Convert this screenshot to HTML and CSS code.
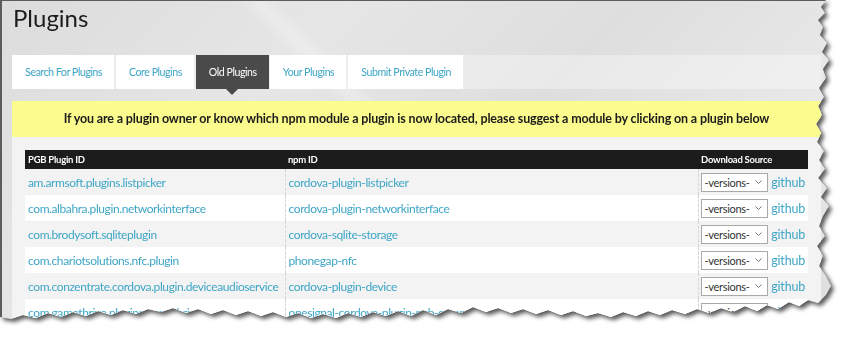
FILE: index.html
```html
<!DOCTYPE html>
<html lang="en">
<head>
  <meta charset="UTF-8" />
  <title>Plugins</title>
  <link rel="stylesheet" href="styles.css">
</head>
<body>

  <div class="shot">
    <div class="page">
      <h1 class="title">Plugins</h1>

      <nav class="tabs">
        <a href="#" class="tab">Search For Plugins</a>
        <a href="#" class="tab">Core Plugins</a>
        <a href="#" class="tab active">Old Plugins</a>
        <a href="#" class="tab">Your Plugins</a>
        <a href="#" class="tab">Submit Private Plugin</a>
      </nav>

      <div class="panel">
        <div class="notice">If you are a plugin owner or know which npm module a plugin is now located, please suggest a module by clicking on a plugin below</div>

        <table class="plugins">
          <colgroup>
            <col class="col-id">
            <col class="col-npm">
            <col class="col-src">
          </colgroup>
          <thead>
            <tr>
              <th>PGB Plugin ID</th>
              <th>npm ID</th>
              <th>Download Source</th>
            </tr>
          </thead>
          <tbody>
            <tr>
              <td><a href="#">am.armsoft.plugins.listpicker</a></td>
              <td><a href="#">cordova-plugin-listpicker</a></td>
              <td><div class="src"><span class="versions">-versions-<svg width="7" height="4" viewBox="0 0 7 4"><path d="M0.5 0.5 L3.5 3.5 L6.5 0.5" fill="none" stroke="#777" stroke-width="1"/></svg></span><a href="#">github</a></div></td>
            </tr>
            <tr>
              <td><a href="#">com.albahra.plugin.networkinterface</a></td>
              <td><a href="#">cordova-plugin-networkinterface</a></td>
              <td><div class="src"><span class="versions">-versions-<svg width="7" height="4" viewBox="0 0 7 4"><path d="M0.5 0.5 L3.5 3.5 L6.5 0.5" fill="none" stroke="#777" stroke-width="1"/></svg></span><a href="#">github</a></div></td>
            </tr>
            <tr>
              <td><a href="#">com.brodysoft.sqliteplugin</a></td>
              <td><a href="#">cordova-sqlite-storage</a></td>
              <td><div class="src"><span class="versions">-versions-<svg width="7" height="4" viewBox="0 0 7 4"><path d="M0.5 0.5 L3.5 3.5 L6.5 0.5" fill="none" stroke="#777" stroke-width="1"/></svg></span><a href="#">github</a></div></td>
            </tr>
            <tr>
              <td><a href="#">com.chariotsolutions.nfc.plugin</a></td>
              <td><a href="#">phonegap-nfc</a></td>
              <td><div class="src"><span class="versions">-versions-<svg width="7" height="4" viewBox="0 0 7 4"><path d="M0.5 0.5 L3.5 3.5 L6.5 0.5" fill="none" stroke="#777" stroke-width="1"/></svg></span><a href="#">github</a></div></td>
            </tr>
            <tr>
              <td><a href="#">com.conzentrate.cordova.plugin.deviceaudioservice</a></td>
              <td><a href="#">cordova-plugin-device</a></td>
              <td><div class="src"><span class="versions">-versions-<svg width="7" height="4" viewBox="0 0 7 4"><path d="M0.5 0.5 L3.5 3.5 L6.5 0.5" fill="none" stroke="#777" stroke-width="1"/></svg></span><a href="#">github</a></div></td>
            </tr>
            <tr>
              <td><a href="#">com.gamethrive.plugins.gamethrive</a></td>
              <td><a href="#">onesignal-cordova-plugin-pgb-compat</a></td>
              <td><div class="src"><span class="versions">-versions-<svg width="7" height="4" viewBox="0 0 7 4"><path d="M0.5 0.5 L3.5 3.5 L6.5 0.5" fill="none" stroke="#777" stroke-width="1"/></svg></span><a href="#">github</a></div></td>
            </tr>
          </tbody>
        </table>
      </div>
    </div>
  </div>

</body>
</html>
```

FILE: styles.css
```css
* { box-sizing: border-box; }
body {
  margin: 0;
  background: #ffffff;
  font-family: 'Lato', 'Open Sans', sans-serif;
}

/* torn-paper screenshot frame */
.shot {
  width: 848px;
  height: 338px;
  filter: drop-shadow(3px 3px 2px rgba(0,0,0,0.65));
}

.page {
  width: 836px;
  height: 324px;
  overflow: hidden;
  padding-left: 10px;
  border-left: 2px solid #5c5c5c;
  border-top: 1px solid #5c5c5c;
  background:
    linear-gradient(45deg, transparent 48%, rgba(255,255,255,0.25) 50%, transparent 52%),
    linear-gradient(135deg, #dcdcdc 0%, #e6e6e6 30%, #dedede 55%, #e9e9e9 80%, #dddddd 100%);
  clip-path: polygon(0 0, 826px 0, 821px 7px, 825px 13px, 818px 20px, 823px 27px, 820px 35px, 827px 43px, 822px 52px, 829px 60px, 823px 69px, 826px 78px, 819px 88px, 824px 97px, 818px 106px, 822px 115px, 816px 124px, 821px 133px, 817px 142px, 824px 151px, 819px 160px, 825px 169px, 818px 178px, 827px 188px, 821px 197px, 829px 206px, 823px 216px, 819px 226px, 825px 236px, 817px 246px, 823px 256px, 819px 266px, 826px 276px, 831px 286px, 826px 295px, 818px 303px, 808px 300px, 799px 306px, 789px 302px, 778px 309px, 767px 305px, 757px 311px, 745px 306px, 733px 312px, 721px 308px, 709px 313px, 697px 309px, 685px 314px, 672px 310px, 660px 315px, 648px 311px, 636px 316px, 623px 312px, 611px 317px, 598px 313px, 586px 316px, 573px 311px, 561px 315px, 548px 310px, 536px 314px, 523px 309px, 511px 313px, 498px 308px, 486px 312px, 473px 307px, 461px 313px, 448px 309px, 436px 315px, 423px 310px, 411px 316px, 398px 311px, 386px 316px, 373px 312px, 361px 317px, 348px 313px, 336px 318px, 323px 314px, 311px 318px, 298px 313px, 286px 317px, 273px 312px, 261px 316px, 248px 311px, 236px 315px, 223px 310px, 211px 314px, 198px 309px, 186px 313px, 173px 308px, 161px 312px, 148px 309px, 136px 314px, 123px 310px, 111px 315px, 98px 311px, 86px 316px, 73px 312px, 61px 317px, 48px 313px, 36px 318px, 23px 315px, 11px 319px, 0 317px);
}

.title {
  margin: 0;
  font-size: 24px;
  line-height: 34px;
  font-weight: normal;
  color: #1c1c1c;
  padding-left: 1px;
}

.tabs {
  margin-top: 20px;
  width: 809px;
  height: 34px;
  display: flex;
  gap: 1px;
  background: rgba(255,255,255,0.35);
}

.tab {
  position: relative;
  display: flex;
  align-items: center;
  padding: 0 12px 0 13px;
  background: #ffffff;
  color: #3ea6c6;
  font-size: 10.6px;
  letter-spacing: -0.45px;
  text-decoration: none;
  border-right: 1px solid #ececec;
}

.tab.active {
  background: #4a4a4a;
  color: #ffffff;
  border-right: none;
}

.tab.active::after {
  content: "";
  position: absolute;
  left: 50%;
  bottom: -6px;
  margin-left: -6px;
  border-left: 6px solid transparent;
  border-right: 6px solid transparent;
  border-top: 6px solid #4a4a4a;
}

.panel {
  margin-top: 12px;
  width: 809px;
  background: #f3f3f3;
  padding-bottom: 40px;
}

.notice {
  height: 36px;
  line-height: 36px;
  background: #fcfc8e;
  color: #1c1c1c;
  font-weight: bold;
  font-size: 12.5px;
  letter-spacing: -0.15px;
  text-align: center;
}

.plugins {
  margin: 13px 0 0 13px;
  width: 783px;
  table-layout: fixed;
  border-collapse: collapse;
  font-size: 12px;
  letter-spacing: -0.4px;
}

.plugins .col-id { width: 260px; }
.plugins .col-npm { width: 413px; }
.plugins .col-src { width: 110px; }

.plugins th {
  background: #1c1c1c;
  color: #ffffff;
  font-size: 9.5px;
  letter-spacing: -0.25px;
  font-weight: bold;
  text-align: left;
  height: 19px;
  padding: 0 3px;
}

.plugins td {
  height: 26px;
  padding: 0 3px;
  white-space: nowrap;
  overflow: hidden;
}

.plugins td + td {
  border-left: 1px dashed #d4d4d4;
}

.plugins tbody tr:nth-child(odd) { background: #f3f3f3; }
.plugins tbody tr:nth-child(even) { background: #ffffff; }

.plugins a {
  color: #3ea6c6;
  text-decoration: none;
}

.src {
  display: flex;
  align-items: center;
  gap: 3px;
  margin-left: -1px;
  font-size: 12.5px;
  letter-spacing: -0.2px;
}

.versions {
  display: inline-flex;
  align-items: center;
  justify-content: space-between;
  width: 69px;
  height: 19px;
  padding: 0 5px 0 3px;
  border: 1px solid #a9a9a9;
  background: #ffffff;
  color: #333333;
  font-size: 11px;
  letter-spacing: -0.3px;
}
```
